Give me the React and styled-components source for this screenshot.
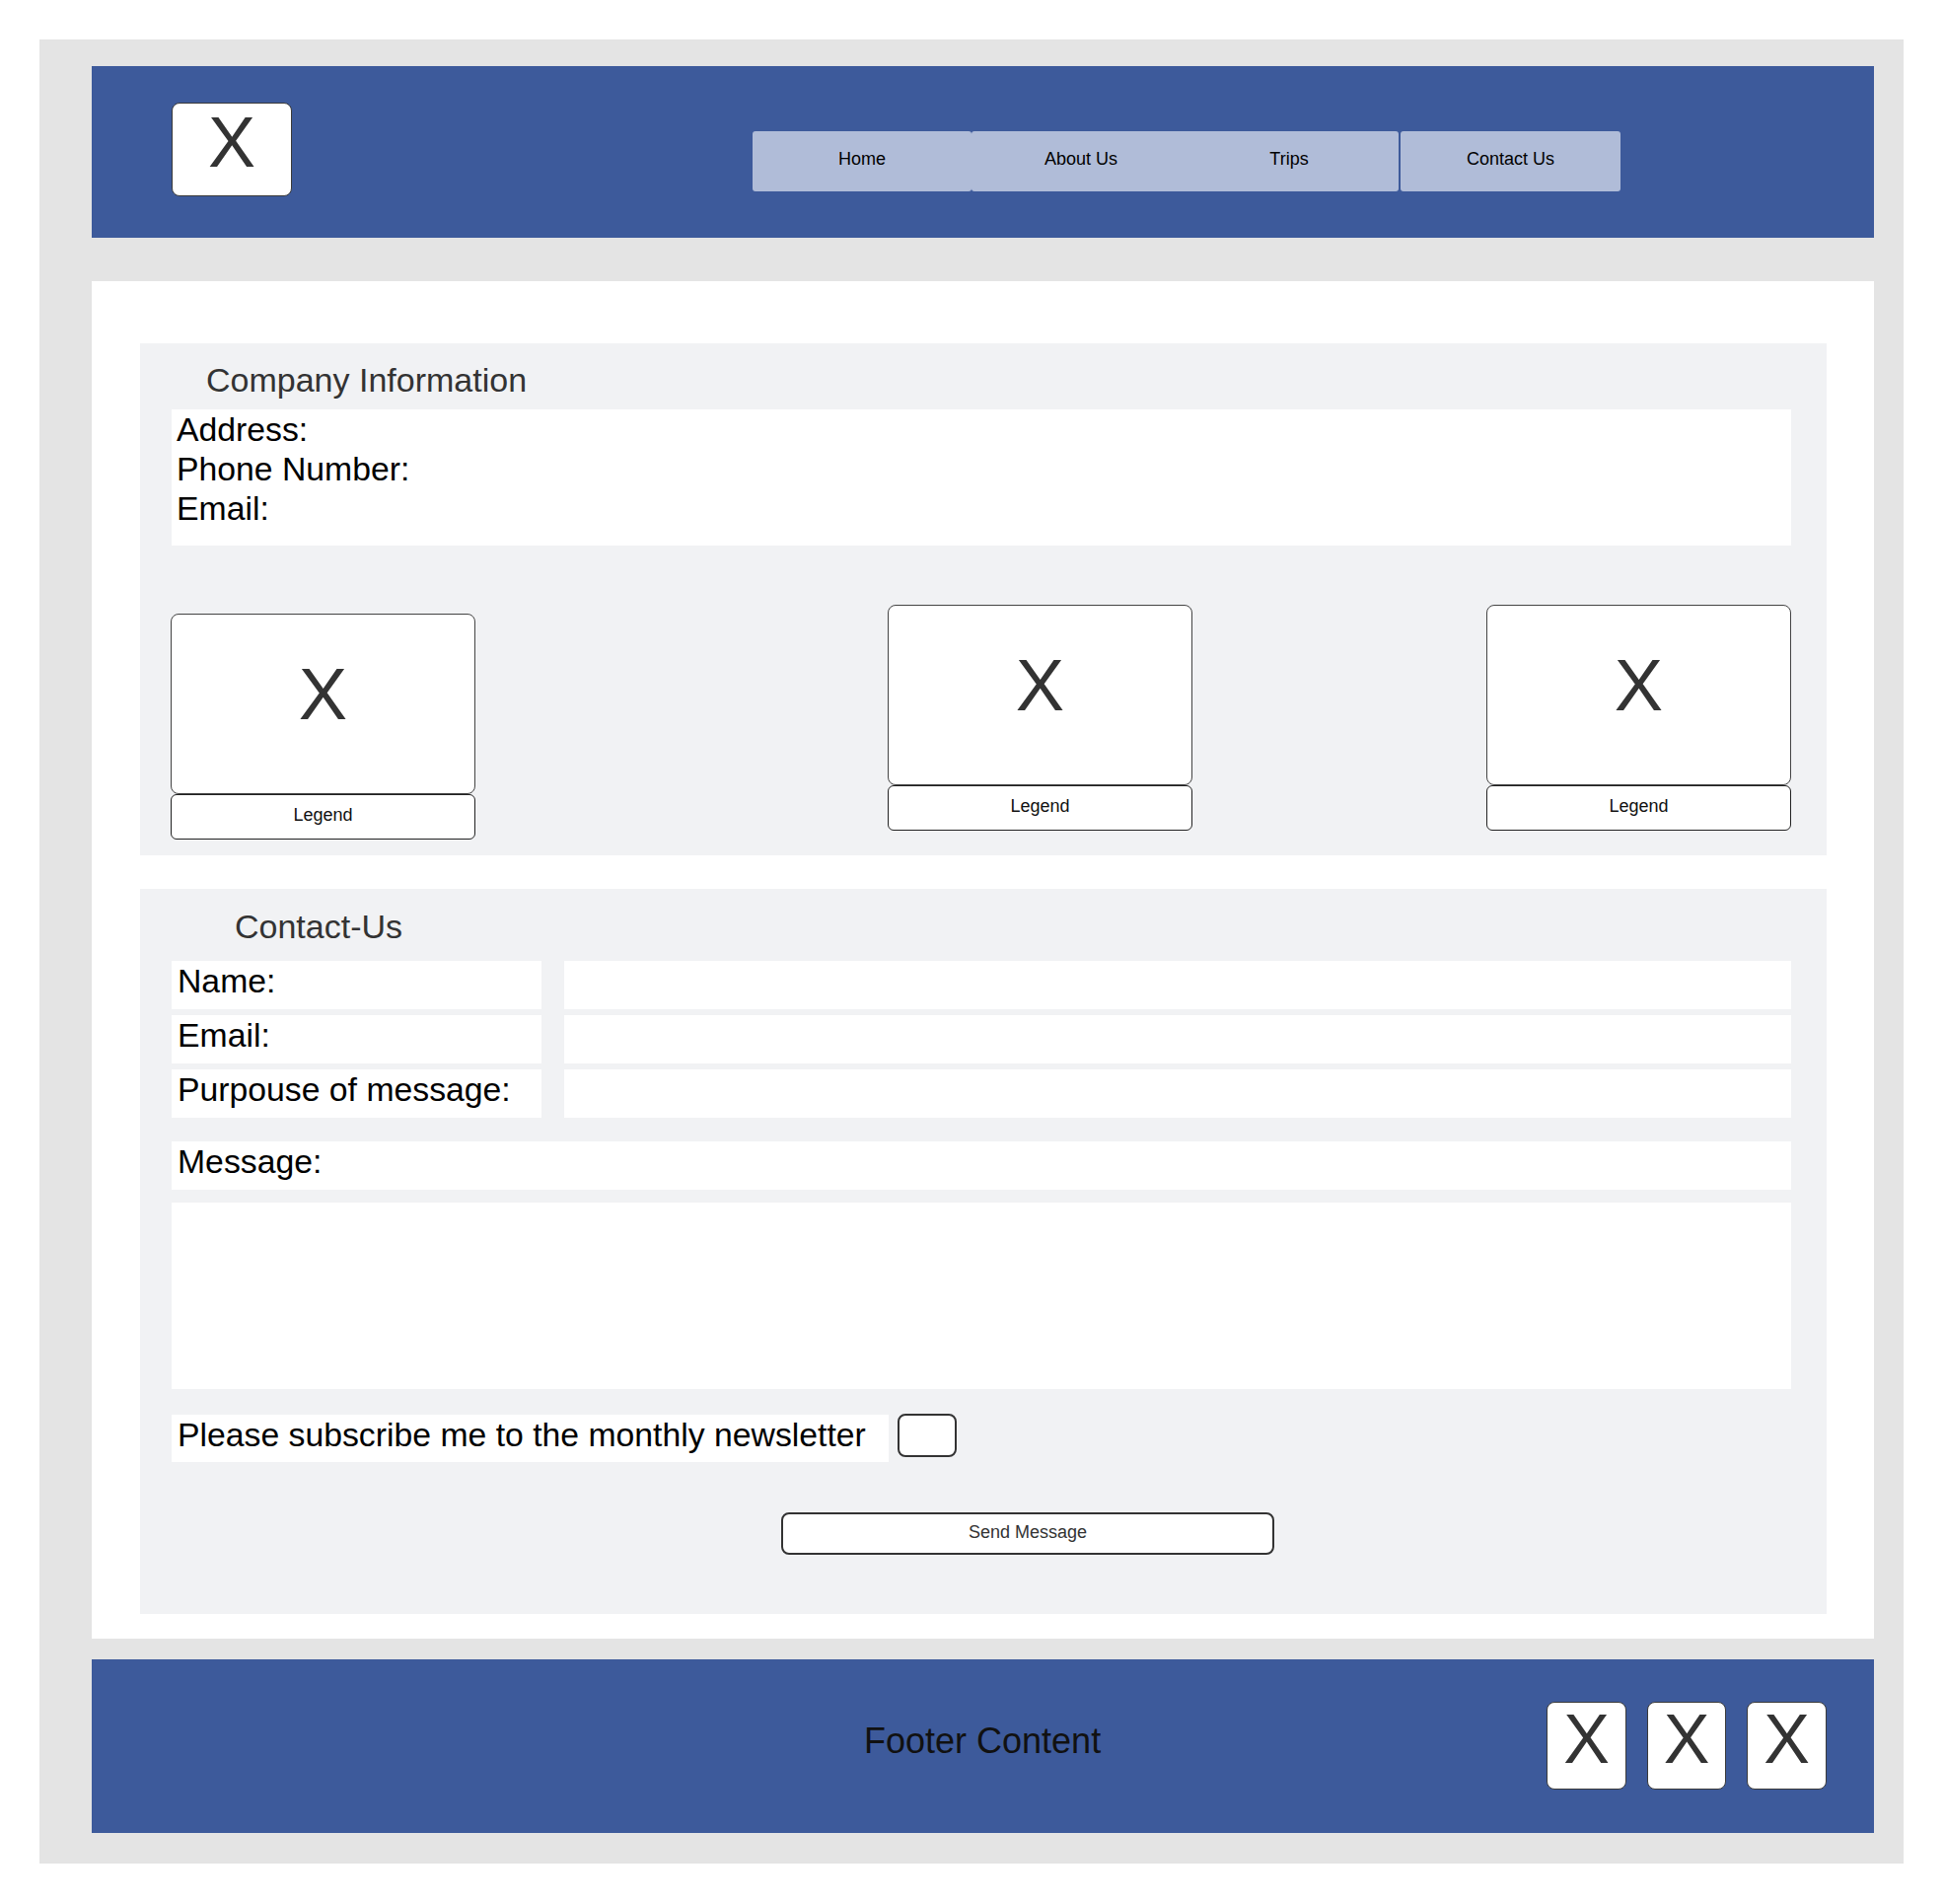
import styled, { createGlobalStyle } from "styled-components";

const GlobalStyle = createGlobalStyle`
  * { box-sizing: border-box; }
  body {
    margin: 0;
    background: #ffffff;
    font-family: "Liberation Sans", Arial, sans-serif;
  }
`;

const Page = styled.div`
  padding: 40px 0 0 40px;
`;

const Frame = styled.div`
  width: 1890px;
  height: 1849px;
  background: #e4e4e4;
  padding: 27px 30px 31px 53px;
  display: flex;
  flex-direction: column;
`;

const Header = styled.header`
  height: 174px;
  flex-shrink: 0;
  background: #3d5a9b;
  display: flex;
  align-items: flex-start;
  padding: 37px 0 0 81px;
  margin-bottom: 44px;
`;

const XBox = styled.div`
  width: ${(p) => p.$w}px;
  height: ${(p) => p.$h}px;
  background: #ffffff;
  border: 1px solid #3a3a3a;
  border-radius: 8px;
  display: flex;
  align-items: center;
  justify-content: center;
  color: #333333;
  font-size: ${(p) => p.$size}px;
  line-height: 1;
  padding-bottom: ${(p) => p.$lift * 2}px;
  flex-shrink: 0;
`;

const Nav = styled.nav`
  display: flex;
  margin: 29px 0 0 467px;
`;

const NavButton = styled.div`
  width: ${(p) => p.$w}px;
  height: 61px;
  margin-left: ${(p) => p.$gap || 0}px;
  background: #b0bcd8;
  border-radius: 3px;
  display: flex;
  align-items: center;
  justify-content: center;
  font-size: 18px;
  color: #000000;
  padding-bottom: 4px;
`;

const Main = styled.main`
  height: 1376px;
  flex-shrink: 0;
  background: #ffffff;
  padding: 63px 48px 25px 49px;
  display: flex;
  flex-direction: column;
  gap: 34px;
`;

const Section = styled.section`
  background: #f1f2f4;
  padding: ${(p) => p.$pad};
  display: flex;
  flex-direction: column;
`;

const SectionTitle = styled.h2`
  margin: 0 0 ${(p) => p.$mb}px 0;
  padding-left: ${(p) => p.$indent}px;
  font-weight: normal;
  font-size: 34px;
  line-height: 40px;
  color: #333333;
`;

const InfoBox = styled.div`
  background: #ffffff;
  padding: 0 0 18px 5px;
  font-size: 33.75px;
  line-height: 40px;
  color: #000000;
`;

const Cards = styled.div`
  display: flex;
  align-items: flex-start;
  margin-top: 60px;
`;

const Card = styled.div`
  width: 310px;
  margin-left: ${(p) => p.$offset}px;
  margin-top: ${(p) => p.$drop || 0}px;
  display: flex;
  flex-direction: column;
`;

const CardImage = styled.div`
  height: 183px;
  background: #ffffff;
  border: 1px solid #444444;
  border-radius: 8px;
  display: flex;
  align-items: center;
  justify-content: center;
  font-size: 74px;
  line-height: 1;
  color: #333333;
  padding-bottom: 20px;
`;

const Legend = styled.div`
  height: 46px;
  background: #ffffff;
  border: 1px solid #222222;
  border-radius: 6px;
  display: flex;
  align-items: center;
  justify-content: center;
  font-size: 18px;
  color: #111111;
  padding-bottom: 4px;
`;

const FieldGrid = styled.div`
  display: grid;
  grid-template-columns: 375px 1fr;
  column-gap: 23px;
  row-gap: 6px;
`;

const LabelBox = styled.div`
  height: ${(p) => p.$h || 49}px;
  width: ${(p) => (p.$w ? `${p.$w}px` : "auto")};
  margin-top: ${(p) => p.$mt || 0}px;
  background: #ffffff;
  padding: 0 0 8px 6px;
  font-size: 33.75px;
  line-height: 41px;
  color: #000000;
  white-space: nowrap;
`;

const Field = styled.input`
  height: 49px;
  border: none;
  outline: none;
  background: #ffffff;
  font: inherit;
`;

const MessageArea = styled.textarea`
  display: block;
  height: 189px;
  margin-top: 13px;
  border: none;
  outline: none;
  resize: none;
  background: #ffffff;
  font: inherit;
`;

const NewsletterRow = styled.div`
  display: flex;
  align-items: flex-start;
  margin-top: 26px;
`;

const CheckBox = styled.div`
  width: 60px;
  height: 44px;
  margin: -1px 0 0 9px;
  background: #ffffff;
  border: 2px solid #333333;
  border-radius: 8px;
`;

const SendButton = styled.button`
  width: 500px;
  height: 43px;
  margin: 51px 0 0 618px;
  background: #ffffff;
  border: 2px solid #333333;
  border-radius: 8px;
  font-family: "Liberation Sans", Arial, sans-serif;
  font-size: 18px;
  color: #333333;
  padding: 0 0 3px;
`;

const Footer = styled.footer`
  height: 176px;
  flex-shrink: 0;
  margin-top: 21px;
  background: #3d5a9b;
  display: flex;
  align-items: center;
`;

const FooterText = styled.div`
  margin-left: 783px;
  font-size: 36px;
  color: #111111;
  padding-bottom: 10px;
`;

const Socials = styled.div`
  display: flex;
  gap: 21px;
  margin-left: auto;
  margin-right: 48px;
  margin-top: -2px;
`;

export default function App() {
  return (
    <>
      <GlobalStyle />
      <Page>
        <Frame>
          <Header>
            <XBox $w={122} $h={95} $size={72} $lift={8}>
              X
            </XBox>
            <Nav>
              <NavButton $w={222}>Home</NavButton>
              <NavButton $w={222}>About Us</NavButton>
              <NavButton $w={222} $gap={-11}>
                Trips
              </NavButton>
              <NavButton $w={223} $gap={2}>
                Contact Us
              </NavButton>
            </Nav>
          </Header>

          <Main>
            <Section $pad="17px 36px 16px 32px">
              <SectionTitle $indent={35} $mb={10}>
                Company Information
              </SectionTitle>
              <InfoBox>
                Address:
                <br />
                Phone Number:
                <br />
                Email:
              </InfoBox>
              <Cards>
                <Card $offset={-1} $drop={9}>
                  <CardImage>X</CardImage>
                  <Legend>Legend</Legend>
                </Card>
                <Card $offset={418}>
                  <CardImage>X</CardImage>
                  <Legend>Legend</Legend>
                </Card>
                <Card $offset={298}>
                  <CardImage>X</CardImage>
                  <Legend>Legend</Legend>
                </Card>
              </Cards>
            </Section>

            <Section $pad="18px 36px 60px 32px">
              <SectionTitle $indent={64} $mb={15}>
                Contact-Us
              </SectionTitle>
              <FieldGrid>
                <LabelBox>Name:</LabelBox>
                <Field />
                <LabelBox>Email:</LabelBox>
                <Field />
                <LabelBox>Purpouse of message:</LabelBox>
                <Field />
              </FieldGrid>
              <LabelBox $mt={24}>Message:</LabelBox>
              <MessageArea />
              <NewsletterRow>
                <LabelBox $w={727} $h={48}>
                  Please subscribe me to the monthly newsletter
                </LabelBox>
                <CheckBox />
              </NewsletterRow>
              <div>
                <SendButton>Send Message</SendButton>
              </div>
            </Section>
          </Main>

          <Footer>
            <FooterText>Footer Content</FooterText>
            <Socials>
              <XBox $w={81} $h={89} $size={70} $lift={6}>
                X
              </XBox>
              <XBox $w={80} $h={89} $size={70} $lift={6}>
                X
              </XBox>
              <XBox $w={81} $h={89} $size={70} $lift={6}>
                X
              </XBox>
            </Socials>
          </Footer>
        </Frame>
      </Page>
    </>
  );
}
